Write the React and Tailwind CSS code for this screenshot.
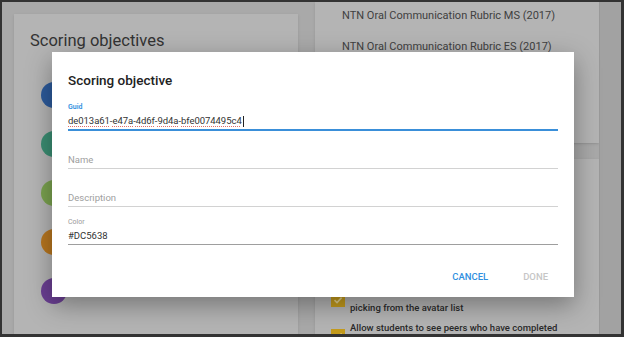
import React from 'react'

const circles = ['bg-[#2c5a9b]', 'bg-[#3a8d72]', 'bg-[#7aa24f]', 'bg-[#b7761f]', 'bg-[#6a3f92]']

function Field({ label, value, placeholder, focused }) {
    return (
        <div className="flex flex-col">
            <div className={`h-[11px] text-[7px] leading-[11px] ${focused ? 'text-[#2f8fe0] font-semibold' : 'text-[#9a9a9a]'}`}>
                {label}
            </div>
            <div className={`h-[16px] text-[9.5px] leading-[16px] ${value ? 'text-[#333]' : 'text-[#a0a0a0]'}`}>
                {value || placeholder}
            </div>
            <div className={focused ? 'h-[2px] bg-[#3a8fd9]' : value ? 'h-px bg-[#9e9e9e]' : 'h-px bg-[#d2d2d2]'} />
        </div>
    )
}

function GuidValue() {
    const parts = ['de013a61', 'e47a', '4d6f', '9d4a', 'bfe0074495c4']
    return (
        <span className="flex items-center tracking-[-0.05px]">
            {parts.map((p, i) => (
                <React.Fragment key={i}>
                    <span className="underline decoration-dotted decoration-[#e0706a] underline-offset-2">{p}</span>
                    {i < parts.length - 1 && '-'}
                </React.Fragment>
            ))}
            <span className="ml-px w-px h-[11px] bg-[#222]" />
        </span>
    )
}

function Check() {
    return (
        <div className="shrink-0 w-[14px] h-[14px] bg-[#c49b1c] flex items-center justify-center">
            <svg width="10" height="10" viewBox="0 0 10 10" fill="none">
                <path d="M1.5 5.2 L4 7.6 L8.6 2.6" stroke="#e3d28e" strokeWidth="1.6" />
            </svg>
        </div>
    )
}

export default function App() {
    return (
        <div className="w-[624px] h-[337px] border-t-2 border-l-2 border-r-[3px] border-b-[3px] border-[#333] bg-[#a9a9a9] overflow-hidden font-['Roboto',sans-serif]">
            <div className="relative h-full flex">
                {/* left column */}
                <div className="ml-[12px] mt-[12px] w-[284px] bg-[#b4b4b4] shadow-sm pl-4 pt-[15px]">
                    <h2 className="text-[16.5px] leading-[24px] text-[#333]">Scoring objectives</h2>
                    <div className="mt-[29px] ml-[11px] flex flex-col gap-[23px]">
                        {circles.map((c, i) => (
                            <div key={i} className={`w-[26px] h-[26px] rounded-full ${c}`} />
                        ))}
                    </div>
                </div>

                {/* right column */}
                <div className="ml-[17px] w-[284px] flex flex-col gap-[16px]">
                    <div className="shrink-0 h-[141px] bg-[#b4b4b4] shadow-sm pl-[27px] pt-[6px] flex flex-col gap-[15px] text-[11px] leading-[16px] text-[#404040]">
                        <div>NTN Oral Communication Rubric MS (2017)</div>
                        <div>NTN Oral Communication Rubric ES (2017)</div>
                    </div>
                    <div className="flex-1 min-h-0 bg-[#b4b4b4] shadow-sm pl-[16px] pt-[125px] flex flex-col gap-[4px] text-[9.5px] leading-[16px] font-medium text-[#2a2a2a]">
                        <div className="flex items-center gap-[5px]">
                            <Check />
                            <div>
                                <div>Allow students to choose their avatar by</div>
                                <div>picking from the avatar list</div>
                            </div>
                        </div>
                        <div className="flex items-center gap-[5px]">
                            <Check />
                            <div>
                                <div>Allow students to see peers who have completed</div>
                                <div className="h-[16px]" />
                            </div>
                        </div>
                    </div>
                </div>

                {/* right strip */}
                <div className="flex-1 border-l border-[#999] bg-[#a2a2a2]" />

                {/* dialog */}
                <div className="absolute left-[50px] top-[50px] w-[522px] bg-white shadow-[0_8px_24px_rgba(0,0,0,0.35)] px-4 pt-[18px] pb-[14px]">
                    <h3 className="text-[13.5px] leading-[20px] font-medium text-[#222]">Scoring objective</h3>
                    <div className="mt-[12px] flex flex-col gap-[10px]">
                        <Field label="Guid" value={<GuidValue />} focused />
                        <Field label="" placeholder="Name" />
                        <Field label="" placeholder="Description" />
                        <Field label="Color" value="#DC5638" />
                    </div>
                    <div className="mt-[26px] flex justify-end gap-[35px] pr-[10px] text-[9.5px] leading-[12px] font-medium">
                        <button className="text-[#2f8fe0]">CANCEL</button>
                        <button className="text-[#c6c6c6]">DONE</button>
                    </div>
                </div>
            </div>
        </div>
    )
}
